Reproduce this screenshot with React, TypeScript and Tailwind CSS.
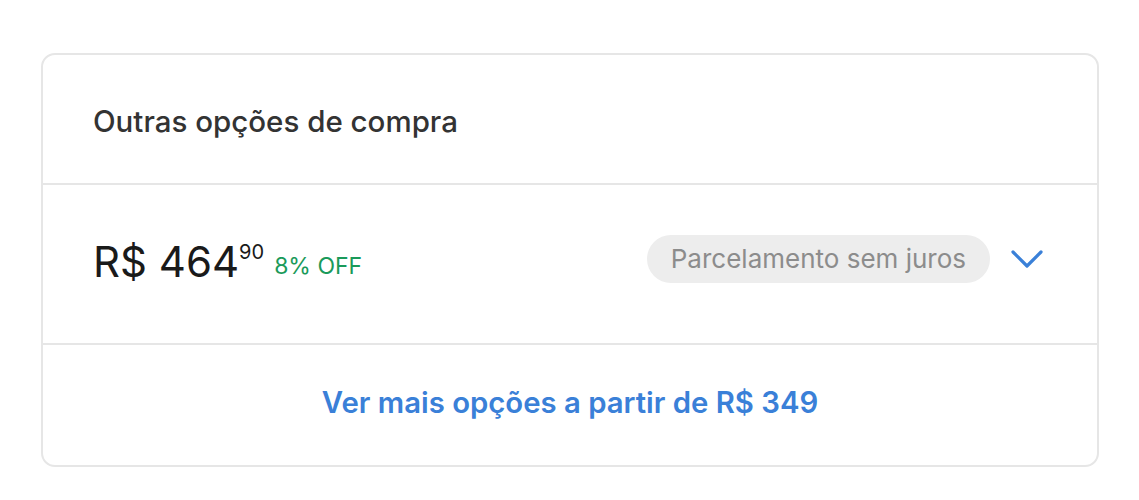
export default function App() {
  return (
    <div className="w-[1139px] h-[500px] bg-white pt-[53px] px-[41px] font-['Inter','Noto_Sans',sans-serif]">
      <div className="w-[1058px] h-[414px] border-2 border-[#e6e6e6] rounded-[14px] flex flex-col">
        <div className="h-[130px] flex items-center px-[50px] border-b-2 border-[#e6e6e6]">
          <h2 className="text-[29.5px] font-medium text-[#333] leading-none pt-[6px]">Outras opções de compra</h2>
        </div>

        <div className="h-[160px] flex items-center px-[50px] border-b-2 border-[#e6e6e6]">
          <div className="flex items-start pb-[4px]">
            <span className="text-[42px] text-[#1a1a1a] leading-none">R$ 464</span>
            <span className="text-[20px] text-[#1a1a1a] leading-none mt-[1px]">90</span>
            <span className="text-[23px] text-[#1a9a5a] leading-none ml-[10px] mt-[14px]">8% OFF</span>
          </div>
          <div className="ml-auto flex items-center pb-[10px]">
            <span className="h-[48px] px-[24px] flex items-center rounded-full bg-[#ededed] text-[26px] text-[#8c8c8c] leading-none">
              Parcelamento sem juros
            </span>
            <svg className="ml-[21px] mr-[4px]" width="32" height="20" viewBox="0 0 32 20" fill="none">
              <path d="M2 3 L16 17 L30 3" stroke="#3a80d8" strokeWidth="3.2" strokeLinecap="round" strokeLinejoin="round" />
            </svg>
          </div>
        </div>

        <div className="flex-1 flex items-center justify-center">
          <span className="text-[29.3px] font-semibold text-[#3a80d8] leading-none pb-[4px]">Ver mais opções a partir de R$ 349</span>
        </div>
      </div>
    </div>
  );
}
